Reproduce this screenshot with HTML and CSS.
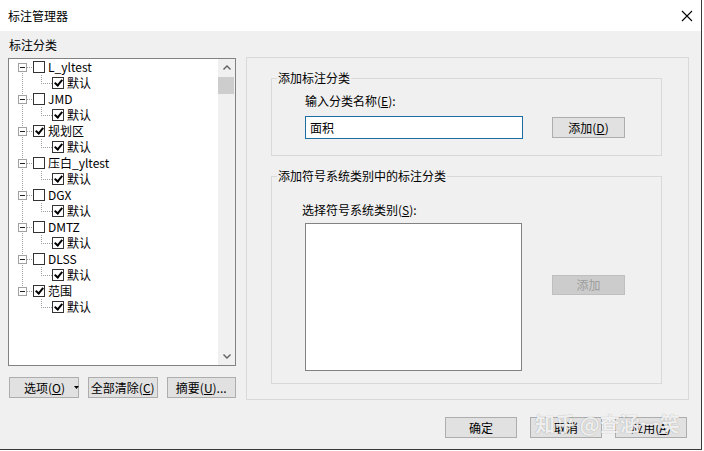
FILE: index.html
```html
<!DOCTYPE html>
<html lang="zh-CN">
<head>
  <meta charset="UTF-8">
  <title>标注管理器</title>
  <link rel="stylesheet" href="styles.css">
</head>
<body>
<div class="window">
  <div class="titlebar">
    <span class="title">标注管理器</span>
    <svg class="close" width="12" height="12" viewBox="0 0 12 12"><path d="M1 1L11 11M11 1L1 11" stroke="#000" stroke-width="1.1" fill="none"/></svg>
  </div>

  <div class="main">
    <div class="left">
      <div class="label">标注分类</div>
      <div class="tree-box">
        <div class="tree">
          <div class="row parent first"><span class="exp"></span><span class="cb"></span><span class="txt">L_yltest</span></div>
          <div class="row child"><span class="cb on"></span><span class="txt">默认</span></div>
          <div class="row parent"><span class="exp"></span><span class="cb"></span><span class="txt">JMD</span></div>
          <div class="row child"><span class="cb on"></span><span class="txt">默认</span></div>
          <div class="row parent"><span class="exp"></span><span class="cb on"></span><span class="txt">规划区</span></div>
          <div class="row child"><span class="cb on"></span><span class="txt">默认</span></div>
          <div class="row parent"><span class="exp"></span><span class="cb"></span><span class="txt">压白_yltest</span></div>
          <div class="row child"><span class="cb on"></span><span class="txt">默认</span></div>
          <div class="row parent"><span class="exp"></span><span class="cb"></span><span class="txt">DGX</span></div>
          <div class="row child"><span class="cb on"></span><span class="txt">默认</span></div>
          <div class="row parent"><span class="exp"></span><span class="cb"></span><span class="txt">DMTZ</span></div>
          <div class="row child"><span class="cb on"></span><span class="txt">默认</span></div>
          <div class="row parent"><span class="exp"></span><span class="cb"></span><span class="txt">DLSS</span></div>
          <div class="row child"><span class="cb on"></span><span class="txt">默认</span></div>
          <div class="row parent last"><span class="exp"></span><span class="cb on"></span><span class="txt">范围</span></div>
          <div class="row child last"><span class="cb on"></span><span class="txt">默认</span></div>
        </div>
        <div class="scrollbar">
          <div class="sb-arrow">
            <svg width="8" height="5" viewBox="0 0 8 5"><path d="M0.5 4.5L4 1L7.5 4.5" stroke="#606060" stroke-width="1.4" fill="none"/></svg>
          </div>
          <div class="thumb"></div>
          <div class="track"></div>
          <div class="sb-arrow">
            <svg width="8" height="5" viewBox="0 0 8 5"><path d="M0.5 0.5L4 4L7.5 0.5" stroke="#606060" stroke-width="1.4" fill="none"/></svg>
          </div>
        </div>
      </div>
      <div class="left-buttons">
        <button class="btn btn-menu"><span class="btn-label">选项(<u>O</u>)</span><svg class="caret" width="5" height="3" viewBox="0 0 5 3"><path d="M0 0H5L2.5 3Z" fill="#000"/></svg></button>
        <button class="btn">全部清除(<u>C</u>)</button>
        <button class="btn">摘要(<u>U</u>)...</button>
      </div>
    </div>

    <div class="outer-group">
      <div class="group g1">
        <span class="group-title">添加标注分类</span>
        <div class="field-label">输入分类名称(<u>E</u>):</div>
        <div class="field-row">
          <input class="input" type="text" value="面积">
          <button class="btn btn-add">添加(<u>D</u>)</button>
        </div>
      </div>

      <div class="group g2">
        <span class="group-title">添加符号系统类别中的标注分类</span>
        <div class="field-label shift">选择符号系统类别(<u>S</u>):</div>
        <div class="list-row">
          <div class="listbox"></div>
          <button class="btn btn-add disabled">添加</button>
        </div>
      </div>
    </div>
  </div>

  <div class="footer">
    <button class="btn btn-foot">确定</button>
    <button class="btn btn-foot">取消</button>
    <button class="btn btn-foot">应用(<u>A</u>)</button>
  </div>

  <div class="watermark">知乎 @查涵一笑</div>
</div>
</body>
</html>
```

FILE: styles.css
```css
body {
  margin: 0;
  background: #fff;
  font-family: "Noto Sans CJK SC", "Microsoft YaHei", sans-serif;
  font-size: 12px;
  color: #000;
}

.window {
  position: relative;
  width: 701px;
  height: 449px;
  background: #f0f0f0;
  border-right: 1px solid #3a3a3a;
  border-bottom: 1px solid #3a3a3a;
}

.titlebar {
  height: 31px;
  background: #fff;
  display: flex;
  align-items: center;
  justify-content: space-between;
  padding: 0 8px;
  box-sizing: border-box;
  line-height: 16px;
}

.main {
  display: flex;
  align-items: flex-start;
  padding: 6px 0 0 8px;
}

.left {
  width: 228px;
}

.label {
  line-height: 16px;
  margin: 0 0 5px 1px;
}

.tree-box {
  height: 308px;
  box-sizing: border-box;
  border: 1px solid #828282;
  background: #fff;
  display: flex;
}

.tree {
  flex: 1;
}

.row {
  height: 16px;
  display: flex;
  align-items: center;
  line-height: 16px;
}

.parent {
  background:
    repeating-linear-gradient(#a0a0a0 0 1px, transparent 1px 2px) 13px 0 / 1px 16px no-repeat,
    repeating-linear-gradient(to right, #a0a0a0 0 1px, transparent 1px 2px) 18px 8px / 6px 1px no-repeat;
}

.parent.first {
  background:
    repeating-linear-gradient(#a0a0a0 0 1px, transparent 1px 2px) 13px 8px / 1px 8px no-repeat,
    repeating-linear-gradient(to right, #a0a0a0 0 1px, transparent 1px 2px) 18px 8px / 6px 1px no-repeat;
}

.parent.last {
  background:
    repeating-linear-gradient(#a0a0a0 0 1px, transparent 1px 2px) 13px 0 / 1px 8px no-repeat,
    repeating-linear-gradient(to right, #a0a0a0 0 1px, transparent 1px 2px) 18px 8px / 6px 1px no-repeat;
}

.child {
  background:
    repeating-linear-gradient(#a0a0a0 0 1px, transparent 1px 2px) 13px 0 / 1px 16px no-repeat,
    repeating-linear-gradient(#a0a0a0 0 1px, transparent 1px 2px) 32px 0 / 1px 8px no-repeat,
    repeating-linear-gradient(to right, #a0a0a0 0 1px, transparent 1px 2px) 32px 8px / 11px 1px no-repeat;
}

.child.last {
  background:
    repeating-linear-gradient(#a0a0a0 0 1px, transparent 1px 2px) 32px 0 / 1px 8px no-repeat,
    repeating-linear-gradient(to right, #a0a0a0 0 1px, transparent 1px 2px) 32px 8px / 11px 1px no-repeat;
}

.exp {
  width: 9px;
  height: 9px;
  box-sizing: border-box;
  margin-left: 9px;
  border: 1px solid #a0a0a0;
  background: linear-gradient(#222, #222) center / 5px 1px no-repeat, #fff;
}

.cb {
  width: 12px;
  height: 12px;
  box-sizing: border-box;
  border: 1px solid #333;
  background: #fff;
  display: flex;
  align-items: center;
  justify-content: center;
}

.parent .cb {
  margin-left: 6px;
}

.child .cb {
  margin-left: 43px;
}

.cb.on::after {
  content: "";
  width: 3px;
  height: 6px;
  margin-top: -2px;
  border-right: 2px solid #000;
  border-bottom: 2px solid #000;
  transform: rotate(40deg);
}

.txt {
  margin-left: 3px;
  white-space: nowrap;
}

.scrollbar {
  width: 17px;
  background: #f0f0f0;
  display: flex;
  flex-direction: column;
}

.sb-arrow {
  height: 17px;
  display: flex;
  align-items: center;
  justify-content: center;
}

.thumb {
  height: 17px;
  margin: 1px 1px 0 0;
  background: #cdcdcd;
}

.track {
  flex: 1;
}

.btn {
  font-family: inherit;
  font-size: 12px;
  color: #000;
  background: #e1e1e1;
  border: 1px solid #adadad;
  border-radius: 0;
  padding: 0;
  margin: 0;
  height: 21px;
  line-height: 19px;
  box-sizing: border-box;
  white-space: nowrap;
}

.left-buttons {
  display: flex;
  gap: 9px;
  margin: 11px 0 0 1px;
}

.left-buttons .btn {
  width: 70px;
}

.btn-menu {
  display: flex;
  align-items: center;
  padding-left: 14px;
}

.btn-label {
  white-space: nowrap;
}

.caret {
  margin-left: 9px;
  flex: none;
}

.outer-group {
  width: 443px;
  height: 343px;
  margin: 20px 0 0 10px;
  box-sizing: border-box;
  border: 1px solid #d9d9d9;
  padding: 20px 0 0 24px;
}

.group {
  position: relative;
  width: 391px;
  box-sizing: border-box;
  border: 1px solid #d9d9d9;
  padding-left: 33px;
}

.group-title {
  position: absolute;
  top: -9px;
  left: 5px;
  padding: 0 1px;
  line-height: 16px;
  background: #f0f0f0;
  white-space: nowrap;
}

.g1 {
  height: 78px;
  padding-top: 14px;
}

.g2 {
  height: 208px;
  margin-top: 20px;
  padding-top: 25px;
}

.field-label {
  line-height: 16px;
  margin-bottom: 7px;
}

.field-label.shift {
  margin: 0 0 5px -3px;
}

.field-row {
  display: flex;
  align-items: center;
}

.input {
  width: 218px;
  height: 23px;
  box-sizing: border-box;
  border: 1px solid #1c6ea4;
  padding: 0 4px;
  margin: 0;
  font-family: inherit;
  font-size: 12px;
  color: #000;
  background: #fff;
  outline: none;
}

.btn-add {
  width: 73px;
  margin-left: 29px;
}

.list-row {
  display: flex;
  align-items: flex-start;
}

.listbox {
  width: 217px;
  height: 148px;
  box-sizing: border-box;
  border: 1px solid #828282;
  background: #fff;
}

.list-row .btn-add {
  margin: 52px 0 0 30px;
  height: 20px;
  line-height: 18px;
}

.btn.disabled {
  background: #cccccc;
  border-color: #bfbfbf;
  color: #9d9d9d;
}

.footer {
  display: flex;
  justify-content: flex-end;
  gap: 13px;
  padding: 17px 14px 0 0;
}

.btn-foot {
  width: 72px;
}

.watermark {
  position: absolute;
  left: 535px;
  top: 410px;
  font-size: 20px;
  font-weight: bold;
  line-height: 28px;
  color: rgba(255, 255, 255, 0.85);
  text-shadow: 0 0 1px rgba(0, 0, 0, 0.35);
  white-space: nowrap;
}
```
